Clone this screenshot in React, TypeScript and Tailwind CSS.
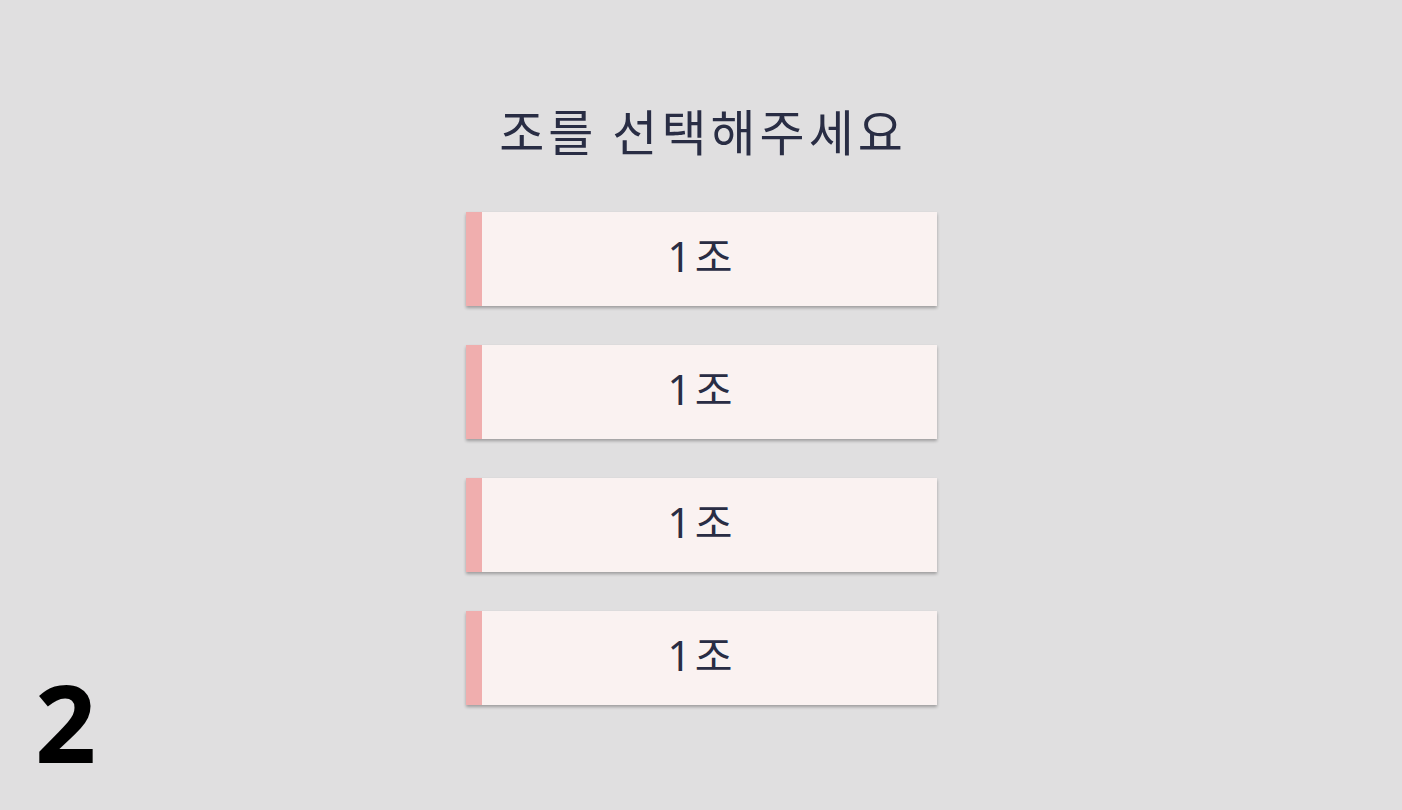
const groups = ["1조", "1조", "1조", "1조"];

const GroupButton = ({ label }: { label: string }) => {
  return (
    <button className="flex h-[94px] w-[471px] bg-[#faf2f1] shadow-[0_2px_3px_rgba(0,0,0,0.3)]">
      <span className="h-full w-[16px] bg-[#f0aeae]" />
      <span className="flex flex-1 items-center justify-center pr-[14px] pb-[4px] font-['Noto_Sans','Noto_Sans_CJK_KR',sans-serif] text-[41px] tracking-[4px] text-[#292d44]">
        {label}
      </span>
    </button>
  );
};

export default function App() {
  return (
    <div
      className="relative flex h-[810px] w-full flex-col items-center bg-[#e0dfe0]"
      style={{ fontFamily: '"Noto Sans CJK KR", sans-serif' }}
    >
      <h1 className="mt-[96px] pl-[4px] text-[49px] leading-[68px] tracking-[4px] text-[#292d44]">
        조를 선택해주세요
      </h1>

      <div className="mt-[48px] flex flex-col gap-[39px]">
        {groups.map((g, i) => (
          <GroupButton key={i} label={g} />
        ))}
      </div>

      <div className="absolute bottom-[35px] left-[35px] font-['Noto_Sans',sans-serif] text-[107px] font-bold leading-none text-black">
        2
      </div>
    </div>
  );
}
